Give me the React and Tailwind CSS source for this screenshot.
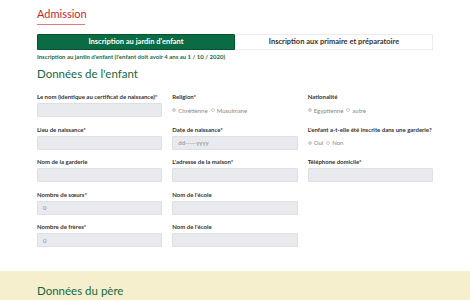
import React from 'react';

const font = { fontFamily: 'Lato, "Noto Sans", sans-serif' };

// Small helpers for the admission form
function Field({ label, children }) {
  return (
    <div className="flex flex-col">
      <label className="h-[7px] text-[6px] leading-[7px] font-bold text-[#333] whitespace-nowrap">{label}</label>
      <div className="mt-[3px] h-[14px]">{children}</div>
    </div>
  );
}

function Input({ value, placeholder }) {
  return (
    <div className="h-[14px] w-full rounded-[1px] border border-[#dcdfe3] bg-[#e8eaed] px-[5px] flex items-center text-[6px] text-[#8a8d91]">
      {value || placeholder || ''}
    </div>
  );
}

function Radios({ options }) {
  return (
    <div className="h-[14px] flex items-center gap-[3px] text-[6px] text-[#888]">
      {options.map((o, i) => (
        <span key={o} className="flex items-center gap-[2px]">
          <span className={`inline-block w-[4px] h-[4px] rounded-full border border-[#cfcfcf] ${i === 0 ? 'bg-[#d6d6d6]' : 'bg-white'}`}></span>
          {o}
        </span>
      ))}
    </div>
  );
}

export default function App() {
  return (
    <div className="w-[470px] h-[300px] overflow-hidden bg-white" style={font}>
      <div className="w-[396px] mx-auto pt-[7px]">
        <h1 className="text-[11px] leading-[14px] text-[#c8282e]">Admission</h1>
        <div className="mt-[3px] h-[1px] w-[48px] bg-[#e07b7f]"></div>

        {/* tabs */}
        <div className="mt-[9px] flex h-[16px]">
          <div className="flex-1 flex items-center justify-center rounded-t-[1px] bg-[#0b6b43] border border-[#07532f] text-white text-[7.5px] font-bold">
            Inscription au jardin d'enfant
          </div>
          <div className="flex-1 flex items-center justify-center border border-[#ececec] text-[#333] text-[7.5px] font-bold">
            Inscription aux primaire et préparatoire
          </div>
        </div>

        <p className="mt-[3px] text-[6px] leading-[7px] font-bold text-[#1b6b45]">
          Inscription au jardin d'enfant (l'enfant doit avoir 4 ans au 1 / 10 / 2020)
        </p>

        <h2 className="mt-[6px] text-[11.5px] leading-[15px] text-[#17683f]">Données de l'enfant</h2>

        <div className="mt-[12px] grid grid-cols-3 gap-x-[10px] gap-y-[8.5px]">
          <Field label="Le nom (identique au certificat de naissance)*"><Input /></Field>
          <Field label="Religion*"><Radios options={['Chrétienne', 'Musulmane']} /></Field>
          <Field label="Nationalité"><Radios options={['Egyptienne', 'autre']} /></Field>

          <Field label="Lieu de naissance*"><Input /></Field>
          <Field label="Date de naissance*"><Input placeholder="dd-----yyyy" /></Field>
          <Field label="L'enfant a-t-elle été inscrite dans une garderie?"><Radios options={['Oui', 'Non']} /></Field>

          <Field label="Nom de la garderie"><Input /></Field>
          <Field label="L'adresse de la maison*"><Input /></Field>
          <Field label="Téléphone domicile*"><Input /></Field>

          <Field label="Nombre de sœurs*"><Input value="0" /></Field>
          <Field label="Nom de l'école"><Input /></Field>
          <div></div>

          <Field label="Nombre de frères*"><Input value="0" /></Field>
          <Field label="Nom de l'école"><Input /></Field>
          <div></div>
        </div>
      </div>

      <div className="mt-[24px] bg-[#f5efcd] h-[60px]">
        <div className="w-[396px] mx-auto pt-[12px]">
          <h2 className="text-[11.5px] leading-[15px] text-[#17683f]">Données du père</h2>
        </div>
      </div>
    </div>
  );
}
